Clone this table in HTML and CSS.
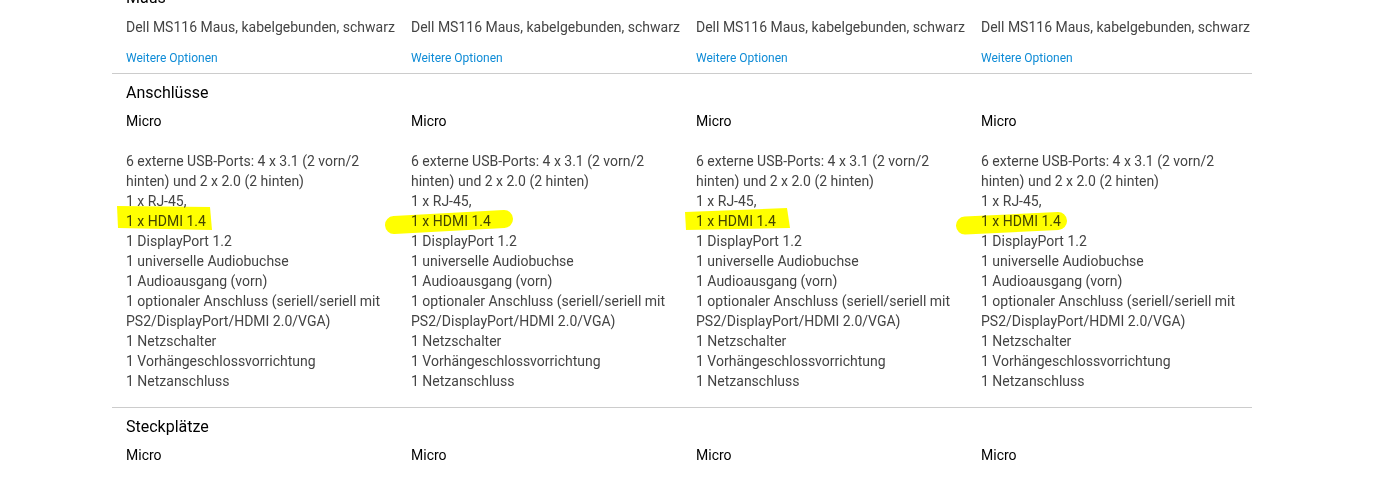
FILE: index.html
```html
<!DOCTYPE html>
<html lang="de">
<head>
<meta charset="utf-8">
<title>Technische Daten</title>
<link rel="stylesheet" href="styles.css">
</head>
<body>
<main class="specs">
  <section class="spec spec-first">
    <h3 class="spec-title">Maus</h3>
    <div class="cols">
      <div class="col"><p class="val nowrap">Dell MS116 Maus, kabelgebunden, schwarz</p><a class="more" href="#">Weitere Optionen</a></div>
      <div class="col"><p class="val nowrap">Dell MS116 Maus, kabelgebunden, schwarz</p><a class="more" href="#">Weitere Optionen</a></div>
      <div class="col"><p class="val nowrap">Dell MS116 Maus, kabelgebunden, schwarz</p><a class="more" href="#">Weitere Optionen</a></div>
      <div class="col"><p class="val nowrap">Dell MS116 Maus, kabelgebunden, schwarz</p><a class="more" href="#">Weitere Optionen</a></div>
    </div>
  </section>

  <section class="spec spec-ports">
    <h3 class="spec-title">Anschlüsse</h3>
    <div class="cols">
      <div class="col">
        <p class="name">Micro</p>
        <ul class="list">
          <svg class="mark" width="1" height="1"><polygon points="-9,55 84,56 86,79 -8,77"/></svg>
          <li>6 externe USB-Ports: 4 x 3.1 (2 vorn/2 hinten) und 2 x 2.0 (2 hinten)</li>
          <li>1 x RJ-45,</li>
          <li>1 x HDMI 1.4</li>
          <li>1 DisplayPort 1.2</li>
          <li>1 universelle Audiobuchse</li>
          <li>1 Audioausgang (vorn)</li>
          <li>1 optionaler Anschluss (seriell/seriell mit PS2/DisplayPort/HDMI 2.0/VGA)</li>
          <li>1 Netzschalter</li>
          <li>1 Vorhängeschlossvorrichtung</li>
          <li>1 Netzanschluss</li>
        </ul>
      </div>
      <div class="col">
        <p class="name">Micro</p>
        <ul class="list">
          <svg class="mark" width="1" height="1"><line x1="-17" y1="74" x2="93" y2="68"/></svg>
          <li>6 externe USB-Ports: 4 x 3.1 (2 vorn/2 hinten) und 2 x 2.0 (2 hinten)</li>
          <li>1 x RJ-45,</li>
          <li>1 x HDMI 1.4</li>
          <li>1 DisplayPort 1.2</li>
          <li>1 universelle Audiobuchse</li>
          <li>1 Audioausgang (vorn)</li>
          <li>1 optionaler Anschluss (seriell/seriell mit PS2/DisplayPort/HDMI 2.0/VGA)</li>
          <li>1 Netzschalter</li>
          <li>1 Vorhängeschlossvorrichtung</li>
          <li>1 Netzanschluss</li>
        </ul>
      </div>
      <div class="col">
        <p class="name">Micro</p>
        <ul class="list">
          <svg class="mark" width="1" height="1"><polygon points="-11,61 91,57 94,77 -10,79"/></svg>
          <li>6 externe USB-Ports: 4 x 3.1 (2 vorn/2 hinten) und 2 x 2.0 (2 hinten)</li>
          <li>1 x RJ-45,</li>
          <li>1 x HDMI 1.4</li>
          <li>1 DisplayPort 1.2</li>
          <li>1 universelle Audiobuchse</li>
          <li>1 Audioausgang (vorn)</li>
          <li>1 optionaler Anschluss (seriell/seriell mit PS2/DisplayPort/HDMI 2.0/VGA)</li>
          <li>1 Netzschalter</li>
          <li>1 Vorhängeschlossvorrichtung</li>
          <li>1 Netzanschluss</li>
        </ul>
      </div>
      <div class="col">
        <p class="name">Micro</p>
        <ul class="list">
          <svg class="mark" width="1" height="1"><line x1="-16" y1="74.5" x2="77" y2="70"/></svg>
          <li>6 externe USB-Ports: 4 x 3.1 (2 vorn/2 hinten) und 2 x 2.0 (2 hinten)</li>
          <li>1 x RJ-45,</li>
          <li>1 x HDMI 1.4</li>
          <li>1 DisplayPort 1.2</li>
          <li>1 universelle Audiobuchse</li>
          <li>1 Audioausgang (vorn)</li>
          <li>1 optionaler Anschluss (seriell/seriell mit PS2/DisplayPort/HDMI 2.0/VGA)</li>
          <li>1 Netzschalter</li>
          <li>1 Vorhängeschlossvorrichtung</li>
          <li>1 Netzanschluss</li>
        </ul>
      </div>
    </div>
  </section>

  <section class="spec spec-slots">
    <h3 class="spec-title">Steckplätze</h3>
    <div class="cols">
      <div class="col"><p class="name">Micro</p></div>
      <div class="col"><p class="name">Micro</p></div>
      <div class="col"><p class="name">Micro</p></div>
      <div class="col"><p class="name">Micro</p></div>
    </div>
  </section>
</main>
</body>
</html>
```

FILE: styles.css
```css
html, body {
  margin: 0;
  padding: 0;
  background: #fff;
  overflow: hidden;
}

body {
  font-family: Roboto, "Liberation Sans", Arial, sans-serif;
  font-size: 14px;
  line-height: 20px;
  color: #444;
}

.specs {
  width: 1140px;
  margin: -21px 0 0 112px;
}

.spec {
  border-top: 1px solid #ccc;
  padding: 8px 0 16px;
}

.spec-first {
  border-top-color: transparent;
  padding-bottom: 5px;
}

.spec-ports {
  padding-top: 9px;
  padding-bottom: 16px;
}

.spec-slots {
  padding-top: 9px;
}

.spec-title {
  margin: 0;
  padding: 0 14px;
  font-size: 16px;
  font-weight: 400;
  line-height: 20px;
  color: #000;
}

.cols {
  display: grid;
  grid-template-columns: repeat(4, 285px);
  margin-top: 9px;
}

.spec-ports .cols,
.spec-slots .cols {
  margin-top: 8px;
}

.col {
  padding: 0 0 0 14px;
  min-width: 0;
}

.val {
  margin: 0;
  color: #444;
}

.nowrap {
  white-space: nowrap;
}

.more {
  display: block;
  margin-top: 11px;
  font-size: 12px;
  line-height: 20px;
  color: #0e8bd6;
  text-decoration: none;
}

.name {
  margin: 0;
  color: #000;
}

.list {
  position: relative;
  list-style: none;
  margin: 20px 0 0;
  padding: 0 14px 0 0;
}

.list li {
  margin: 0;
  padding: 0;
}

.mark {
  position: absolute;
  left: 0;
  top: 0;
  overflow: visible;
  mix-blend-mode: multiply;
  z-index: 1;
  pointer-events: none;
}

.mark polygon {
  fill: #ffff00;
}

.mark line {
  stroke: #ffff00;
  stroke-width: 18;
  stroke-linecap: round;
}
```
